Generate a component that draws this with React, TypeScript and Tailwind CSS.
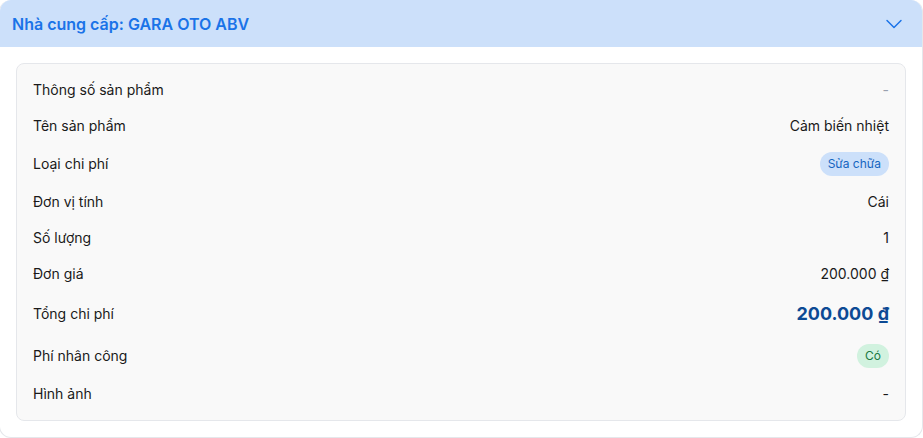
import { ChevronDown } from "lucide-react";

type Row = {
    label: string;
    value: React.ReactNode;
};

function Badge({ children, tone }: { children: React.ReactNode; tone: "blue" | "green" }) {
    const cls =
        tone === "blue" ? "bg-[#cce0fa] text-[#1565c0]" : "bg-[#d1f2df] text-[#1b7a45]";
    return <span className={`inline-flex h-6 items-center rounded-full px-2 text-xs ${cls}`}>{children}</span>;
}

const rows: Row[] = [
    { label: "Thông số sản phẩm", value: <span className="text-gray-400">-</span> },
    { label: "Tên sản phẩm", value: "Cảm biến nhiệt" },
    { label: "Loại chi phí", value: <Badge tone="blue">Sửa chữa</Badge> },
    { label: "Đơn vị tính", value: "Cái" },
    { label: "Số lượng", value: "1" },
    { label: "Đơn giá", value: "200.000 ₫" },
    {
        label: "Tổng chi phí",
        value: <span className="text-lg font-bold leading-7 text-[#0d4a94]">200.000 ₫</span>,
    },
    { label: "Phí nhân công", value: <Badge tone="green">Có</Badge> },
    { label: "Hình ảnh", value: "-" },
];

export default function App() {
    return (
        <div className="min-h-screen overflow-hidden bg-white font-['Inter',sans-serif] text-[#1a1a1a]">
            {/* card sits 1px off the left edge in the capture */}
            <div className="-ml-px overflow-hidden rounded-xl border border-t-0 border-gray-200">
                <div className="flex items-center justify-between bg-[#cce0fa] pb-[11px] pl-3 pr-[14px] pt-3">
                    <h3 className="text-base font-semibold leading-6 text-[#1a73e8]">Nhà cung cấp: GARA OTO ABV</h3>
                    <ChevronDown className="-my-0.5 h-7 w-7 text-[#1a73e8]" strokeWidth={1.25} />
                </div>
                <div className="p-4">
                    <div className="rounded-lg border border-gray-200 bg-[#f9f9f9] px-4 py-2">
                        {rows.map((r) => (
                            <div key={r.label} className="flex items-center justify-between py-2 text-sm leading-5">
                                <span>{r.label}</span>
                                <span>{r.value}</span>
                            </div>
                        ))}
                    </div>
                </div>
            </div>
        </div>
    );
}
